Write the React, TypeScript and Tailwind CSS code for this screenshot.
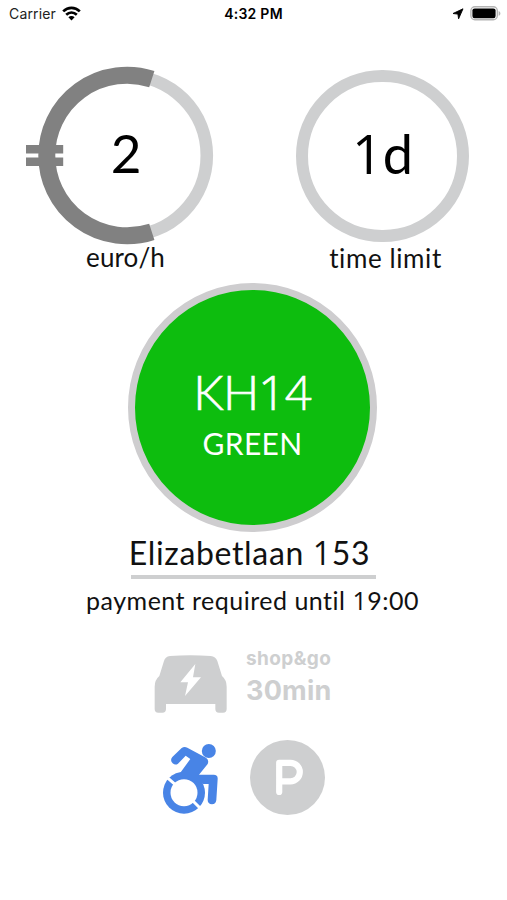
import React from "react";

function StatusBar() {
  return (
    <header className="grid h-7 grid-cols-3 items-center pl-[9px] pr-[6px] font-['Inter',sans-serif] text-[14px] leading-7 text-[#222]">
      <div className="flex items-center gap-[6px]">
        <span className="tracking-[0.15px]">Carrier</span>
        <svg width="19" height="15" viewBox="0 0 19 15" fill="none" stroke="#000" strokeWidth="2.7" className="-mt-[2px]">
          <path d="M1.2 5.4C6 .8 13 .8 17.8 5.4" />
          <path d="M4.2 8.7C7.3 5.8 11.7 5.8 14.8 8.7" />
          <path d="M9.5 14.4 6.4 11.2C8 9.6 11 9.6 12.6 11.2Z" fill="#000" stroke="none" />
        </svg>
      </div>
      <span className="pr-[3px] text-center text-[14px] font-semibold tracking-[0.25px] text-black">4:32 PM</span>
      <div className="flex items-center justify-end gap-[6px]">
        <svg width="12" height="12" viewBox="0 0 12 12">
          <path d="M11 .8 6.6 10.8 5.9 6.100 1 5.500Z" fill="#000" stroke="#000" strokeWidth=".9" strokeLinejoin="round" />
        </svg>
        <svg width="31" height="15" viewBox="0 0 31 15" className="-mt-[2px]">
          <rect x=".9" y=".8" width="26.4" height="13" rx="4" fill="#fff" stroke="#b4b4b4" strokeWidth="1.4" />
          <rect x="2.4" y="2.4" width="23.2" height="9.800" rx="2.2" fill="#000" />
          <path d="M28.6 4.9C31 6 31 8.8 28.6 9.8Z" fill="#b4b4b4" />
        </svg>
      </div>
    </header>
  );
}

/* Lato's figure one has a foot; this one is a plain stem with a flag. */
function One() {
  return <span className="font-['Open_Sans',sans-serif] leading-[0]">1</span>;
}

function PriceGauge() {
  return (
    <section className="ml-[26px] flex w-[188px] flex-col">
      <div className="grid h-[174px]">
        <svg className="col-start-1 row-start-1 overflow-visible" width="188" height="179" viewBox="26 66 188 179" fill="none">
          <circle cx="127" cy="155.5" r="79.8" stroke="#cecfd0" strokeWidth="12.6" />
          <path d="M151.8 79.1A80.3 80.3 0 1 0 151.8 231.9" stroke="#818181" strokeWidth="17" />
          <path d="M26 145h37.2v8.6H26zM26 157.5h37.2v8.6H26z" fill="#818181" />
        </svg>
        <span className="col-start-1 row-start-1 mt-[57px] pl-[12px] text-center text-[53px] leading-[60px] text-black">2</span>
      </div>
      <span className="mt-px pl-[11px] text-center text-[26px] leading-8 tracking-[0.1px]">euro/h</span>
    </section>
  );
}

function LimitGauge() {
  return (
    <section className="ml-[82px] flex w-[173px] flex-col pt-[4px]">
      <div className="flex h-[172px] items-center justify-center rounded-full border-[12.5px] border-[#cecfd0] pb-[5px]">
        <span className="text-[54px] leading-[60px] text-black">
          <One />d
        </span>
      </div>
      <span className="pl-[6px] text-center text-[26px] leading-8 tracking-[0.6px]">time limit</span>
    </section>
  );
}

function ElectricCar() {
  return (
    <svg width="74" height="59" viewBox="28 45 222 177">
      <path
        d="M76 48Q137 43 198 48Q213 50 218 63L232 108Q246 120 246 140V207Q246 218 235 218H223Q212 218 212 207V192H64V207Q64 218 53 218H41Q30 218 30 207V140Q30 120 44 108L57 66Q61 50 76 48Z"
        fill="#cecfd0"
      />
      <path d="M152 72 107 127H130L121 168 169 112H145Z" fill="#fff" />
    </svg>
  );
}

function Wheelchair() {
  return (
    <svg width="75" height="85" viewBox="0 0 225 255">
      <g fill="#4884e6">
        <circle cx="176.500" cy="48" r="21" />
        <circle cx="102" cy="173" r="63" />
        <path d="M95 39Q103 33 112 38L168 68Q178 75 173 87L147 119H191Q204 119 203 132L199 195Q197 208 186 208Q173 207 173 195L176 147H160Q143 138 111 136L80 128 121 72 107 62 84 86Q76 92 68 85Q59 76 67 66Z" />
      </g>
      <circle cx="102" cy="173" r="40.500" fill="#fff" />
      <path d="M51 127 76 149M123 192 156 225" stroke="#fff" strokeWidth="9" />
    </svg>
  );
}

function ParkingBadge() {
  return (
    <svg width="75" height="75" viewBox="0 0 75 75" fill="none">
      <circle cx="37.500" cy="37.500" r="37.500" fill="#cecfd0" />
      <path d="M29.200 52V22.800H40.500A9.300 9.300 0 0 1 40.500 41.400H29.200" stroke="#fff" strokeWidth="6.200" strokeLinecap="round" strokeLinejoin="round" />
    </svg>
  );
}

export default function App() {
  return (
    <div className="h-[900px] w-[507px] overflow-hidden bg-white font-['Lato',sans-serif] text-[#111]">
      <StatusBar />
      <main className="pt-[38px]">
        <div className="flex h-[217px] items-start">
          <PriceGauge />
          <LimitGauge />
        </div>
        <section className="flex flex-col items-center pr-[2px]">
          <div className="flex h-[249px] w-[249px] flex-col items-center rounded-full border-[7.5px] border-[#cecdcf] bg-[#0dbd0e] pt-[72px] text-white">
            <span className="h-[60px] text-[48px] font-light leading-[60px] tracking-[-0.9px] [-webkit-text-stroke:0.7px_white]">
              KH<One />4
            </span>
            <span className="mt-px text-[30px] leading-10 tracking-[0.3px]">GREEN</span>
          </div>
          <span className="mr-[6px] h-[43px] pt-px text-[32px] leading-10 tracking-[0.65px]">
            Elizabetlaan <One />53
          </span>
          <div className="ml-[2px] h-[3.5px] w-[245px] bg-[#cecfd0]" />
          <p className="mt-[5px] text-[25px] leading-8 tracking-[0.5px]">
            payment required until <One />9:00
          </p>
        </section>
        <section className="mt-[39.5px] flex pl-[154px]">
          <ElectricCar />
          <div className="ml-[18px] flex flex-col font-['Inter',sans-serif] font-bold text-[#cecfd0]">
            <span className="-mt-[8.5px] text-[19px] leading-6 tracking-[0.4px]">shop&amp;go</span>
            <span className="mt-[2.5px] text-[27px] leading-9 tracking-[0.2px]">30min</span>
          </div>
        </section>
        <section className="mt-[20.5px] flex pl-[150px]">
          <Wheelchair />
          <div className="ml-[25px] mt-[5px]">
            <ParkingBadge />
          </div>
        </section>
      </main>
    </div>
  );
}
